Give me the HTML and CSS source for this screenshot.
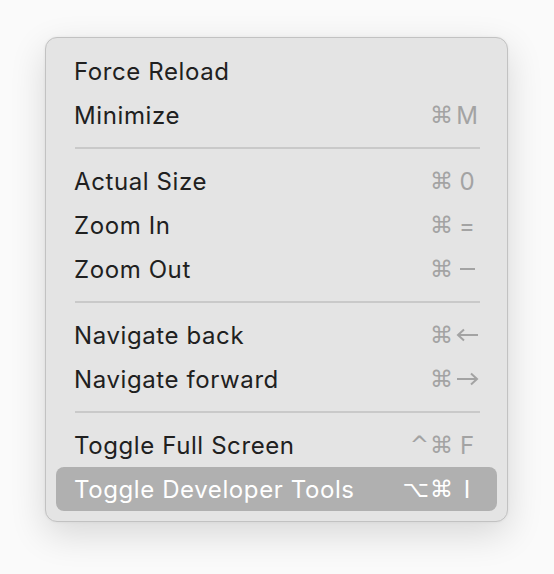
FILE: index.html
```html
<!DOCTYPE html>
<html>
<head>
<meta charset="utf-8">
<link rel="stylesheet" href="styles.css">
</head>
<body>
<div class="menu">
  <div class="item"><span class="label">Force Reload</span></div>
  <div class="item"><span class="label">Minimize</span><span class="keys"><span class="mod">⌘</span><span class="key">M</span></span></div>
  <div class="sep"></div>
  <div class="item"><span class="label">Actual Size</span><span class="keys"><span class="mod">⌘</span><span class="key">0</span></span></div>
  <div class="item"><span class="label">Zoom In</span><span class="keys"><span class="mod">⌘</span><span class="key">=</span></span></div>
  <div class="item"><span class="label">Zoom Out</span><span class="keys"><span class="mod">⌘</span><span class="key"><span class="minus"></span></span></span></div>
  <div class="sep"></div>
  <div class="item"><span class="label">Navigate back</span><span class="keys"><span class="mod">⌘</span><span class="key"><svg class="arrow" width="23" height="14" viewBox="0 0 23 14"><path d="M22 7H2M8 1.5L2 7l6 5.5" fill="none" stroke="currentColor" stroke-width="2"/></svg></span></span></div>
  <div class="item"><span class="label">Navigate forward</span><span class="keys"><span class="mod">⌘</span><span class="key"><svg class="arrow" width="23" height="14" viewBox="0 0 23 14"><path d="M1 7h20M15 1.5L21 7l-6 5.5" fill="none" stroke="currentColor" stroke-width="2"/></svg></span></span></div>
  <div class="sep"></div>
  <div class="item"><span class="label">Toggle Full Screen</span><span class="keys"><span class="mod">^⌘</span><span class="key">F</span></span></div>
  <div class="item active"><span class="label">Toggle Developer Tools</span><span class="keys"><span class="mod">⌥⌘</span><span class="key">I</span></span></div>
</div>
</body>
</html>
```
FILE: styles.css
```css
html, body {
  margin: 0;
  padding: 0;
  background: #fafafa;
  min-height: 574px;
}
body {
  padding: 37px 0 0 45px;
  box-sizing: border-box;
  font-family: Inter, "Liberation Sans", sans-serif;
}
.menu {
  width: 441px;
  padding: 11px 10px 10px 10px;
  background: #e4e4e4;
  border: 1px solid #c2c2c2;
  border-radius: 12px;
  box-shadow: 0 12px 36px rgba(0,0,0,0.14), 0 0 3px rgba(0,0,0,0.06);
  box-sizing: content-box;
}
.item {
  height: 44px;
  display: flex;
  align-items: center;
  justify-content: space-between;
  padding: 0 17px 0 18px;
  border-radius: 8px;
  color: #202020;
  font-size: 24px;
}
.label {
  letter-spacing: 0.6px;
}
.keys {
  display: flex;
  align-items: center;
  color: #a3a3a3;
}
.mod {
  font-family: "DejaVu Sans", sans-serif;
  font-size: 23px;
  text-align: right;
  letter-spacing: 1px;
}
.key {
  width: 26px;
  display: flex;
  justify-content: center;
  font-size: 24px;
}
.minus {
  display: block;
  width: 15px;
  height: 2px;
  background: currentColor;
}
.arrow {
  display: block;
}
.sep {
  height: 22px;
  display: flex;
  align-items: center;
  padding: 0 17px 0 19px;
}
.sep::before {
  content: "";
  flex: 1;
  height: 2px;
  background: #c9c9c9;
}
.active {
  background: #b0b0b0;
  color: #ffffff;
}
.active .keys {
  color: #ffffff;
}
```
